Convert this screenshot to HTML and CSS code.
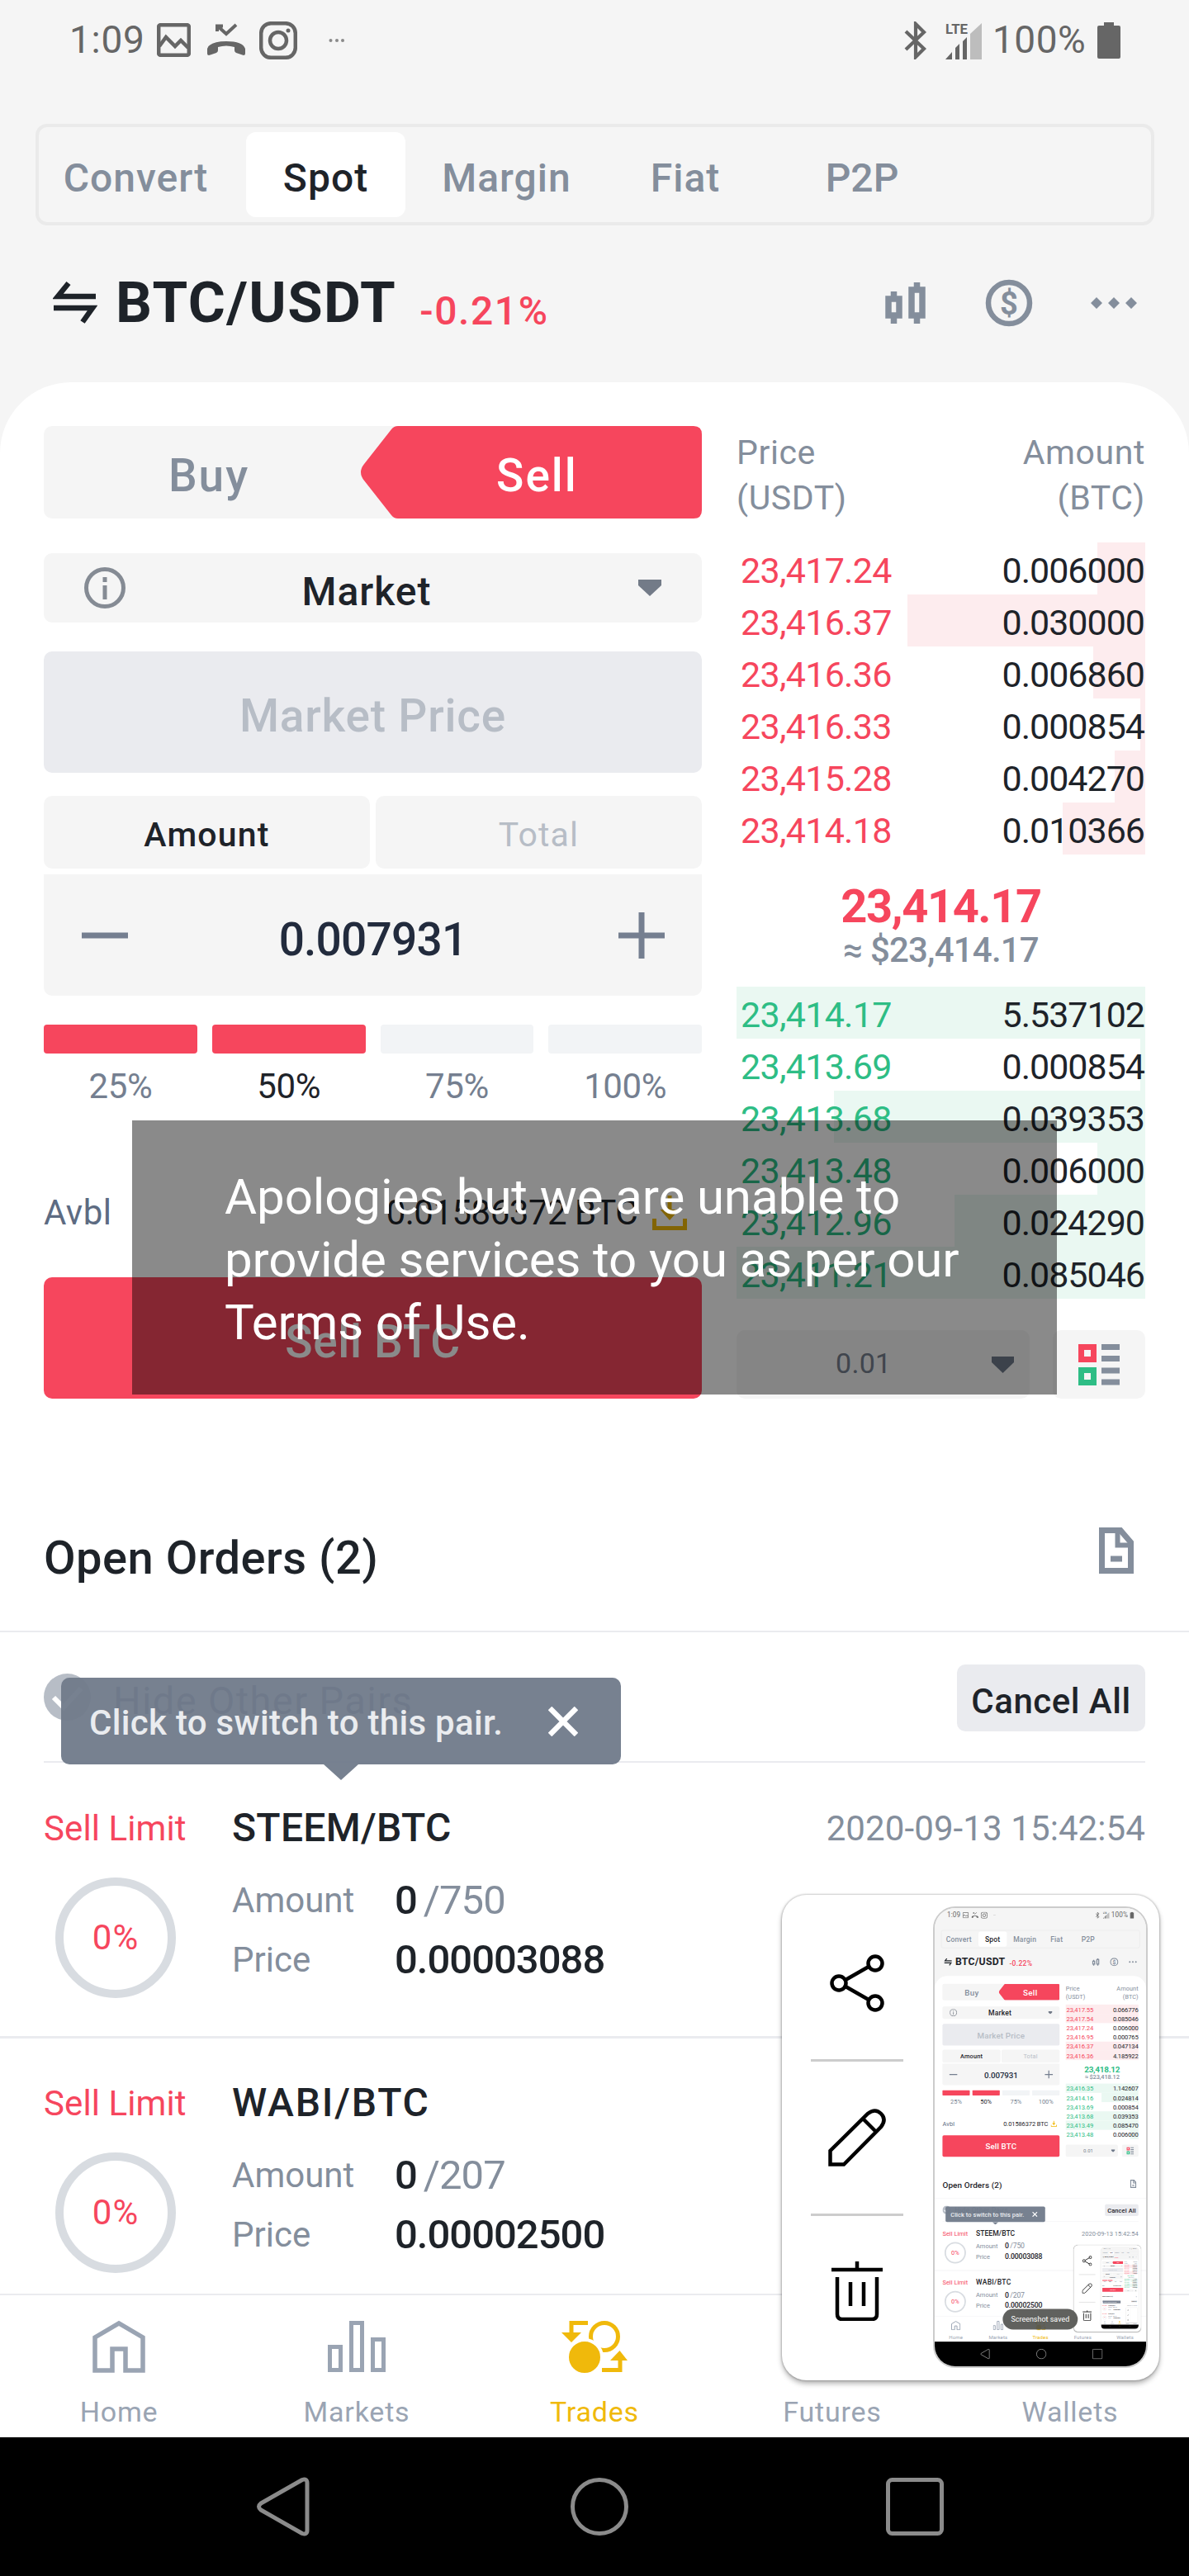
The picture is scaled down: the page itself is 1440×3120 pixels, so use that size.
FILE: index.html
```
<!DOCTYPE html>
<html lang="en">
<head>
    <meta charset="UTF-8">
    <meta name="viewport" content="width=device-width, initial-scale=1.0">

    <title>BTC/USDT</title>

    <link rel="stylesheet" href="styles.css">
</head>
<body>

<div class="screen">

    <div class="content">

        <div class="status-bar">
            <span class="clock">1:09</span>
            <svg class="st-image" width="41" height="41" viewBox="0 0 41 41" fill="none" stroke="#666" stroke-width="4.5"><rect x="2.2" y="2.2" width="36.6" height="36.6" rx="2"/><path d="M3 28l8-11 11 11 7-7 9 9"/></svg>
            <svg class="st-call" width="48" height="41" viewBox="0 0 48 41"><path d="M13 10V3.500h7M14 4l10 9L36 2" fill="none" stroke="#666" stroke-width="4"/><path d="M1 31Q4 22 24 22t23 9v6q0 2-2 2l-9-3q-2-1-2-3v-4q-10-3-20 0v4q0 2-2 3l-9 3q-2 0-2-2z" fill="#666"/></svg>
            <svg class="st-insta" width="46" height="46" viewBox="0 0 46 46" fill="none" stroke="#666" stroke-width="4.500"><rect x="2.200" y="2.200" width="41.600" height="41.600" rx="12"/><circle cx="23" cy="23" r="10"/><circle cx="35" cy="11" r="2.500" fill="#666" stroke="none"/></svg>
            <svg class="st-more" width="20" height="6" viewBox="0 0 20 6" fill="#8a8a8a"><circle cx="2.500" cy="3" r="2"/><circle cx="10" cy="3" r="2"/><circle cx="17" cy="3" r="2"/></svg>
            <svg class="st-bt" width="28" height="46" viewBox="0 0 28 46" fill="none" stroke="#666" stroke-width="4.200"><path d="M2 12l22 21-10 10V3l10 10L2 34"/></svg>
            <svg class="st-signal" width="46" height="46" viewBox="0 0 46 46"><path d="M30 46V15L44 2v44z" fill="#bdbdbd"/><path d="M0 46l8-9v9zM12 46V32l5-5v19zM21 46V24l5-5v27z" fill="#666"/><text x="0" y="15" font-size="17" font-weight="700" fill="#666" textLength="27" lengthAdjust="spacingAndGlyphs">LTE</text></svg>
            <span class="battery-level">100%</span>
            <svg class="st-battery" width="28" height="44" viewBox="0 0 28 44" fill="#666"><path d="M8 0h12v4h6q2 0 2 2v36q0 2-2 2H2q-2 0-2-2V6q0-2 2-2h6z"/></svg>
        </div>

        <div class="market-tabs">
            <div class="tab tab-convert">Convert</div>
            <div class="tab tab-spot active">Spot</div>
            <div class="tab tab-margin">Margin</div>
            <div class="tab tab-fiat">Fiat</div>
            <div class="tab tab-p2p">P2P</div>
        </div>

        <div class="pair-bar">
            <svg width="54" height="54" viewBox="0 0 54 54" fill="none" stroke="#1e2329" stroke-width="6.500"><path d="M52 19H6L19 3"/><path d="M1 33h47L36 50"/></svg>
            <span class="pair-name">BTC/USDT</span>
            <span class="pair-change">-0.21%</span>
            <svg class="ic-candle" width="52" height="52" viewBox="0 0 52 52" fill="none" stroke="#848e9c" stroke-width="7.500"><path d="M5 21h13v20H5zM11.500 12v8M11.500 42v9M33 10h13v31H33zM39.500 1v8M39.500 42v9"/></svg>
            <svg class="ic-dollar" width="58" height="58" viewBox="0 0 58 58"><circle cx="29" cy="29" r="25" fill="none" stroke="#848e9c" stroke-width="6.500"/><text x="29" y="42.500" text-anchor="middle" font-size="38" font-weight="700" fill="#848e9c">$</text></svg>
            <svg class="ic-dots" width="58" height="16" viewBox="0 0 58 16" fill="#848e9c"><path d="M8 1l7 7-7 7-7-7zM29 1l7 7-7 7-7-7zM50 1l7 7-7 7-7-7z"/></svg>
        </div>

        <div class="panel">

            <div class="trade">

                <div class="order-form">
                    <div class="side-toggle">
                        <div class="side-buy">Buy</div>
                        <div class="side-sell">Sell</div>
                    </div>

                    <div class="type-select">
                        <svg width="50" height="50" viewBox="0 0 50 50" fill="none" stroke="#858b94" stroke-width="5"><circle cx="25" cy="25" r="22.500"/><path d="M25 12v6M25 22v17"/></svg>
                        <span>Market</span>
                        <svg width="28" height="20" viewBox="0 0 28 20" fill="#737b88"><path d="M0 0h28v7L14 20 0 7z"/></svg>
                    </div>

                    <div class="price-field">Market Price</div>

                    <div class="unit-tabs">
                        <div class="unit active">Amount</div>
                        <div class="unit">Total</div>
                    </div>

                    <div class="stepper">
                        <svg width="56" height="56" viewBox="0 0 56 56" fill="#757f90"><path d="M0 24.500h56v7H0z"/></svg>
                        <span>0.007931</span>
                        <svg width="56" height="56" viewBox="0 0 56 56" fill="#757f90"><path d="M0 24.500h56v7H0zM24.500 0h7v56h-7z"/></svg>
                    </div>

                    <div class="percents">
                        <div class="percent filled">25%</div>
                        <div class="percent filled current">50%</div>
                        <div class="percent">75%</div>
                        <div class="percent">100%</div>
                    </div>

                    <div class="available">
                        <span class="avbl-label">Avbl</span>
                        <span class="avbl-value">0.01586372 BTC</span>
                        <svg width="42" height="42" viewBox="0 0 42 42"><path d="M2.500 28v11.500h37V28" fill="none" stroke="#f0b90b" stroke-width="5"/><path d="M18.500 0h5v17h9L21 30 9.500 17h9z" fill="#f0b90b"/></svg>
                    </div>

                    <div class="submit">Sell BTC</div>
                </div>

                <div class="order-book">
                    <div class="book-head">
                        <div>Price<br>(USDT)</div>
                        <div class="right">Amount<br>(BTC)</div>
                    </div>
                    <div class="asks"></div>
                    <div class="last-price"></div>
                    <div class="last-fiat"></div>
                    <div class="bids"></div>
                    <div class="book-foot">
                        <div class="depth-select">
                            <span>0.01</span>
                            <svg width="27" height="20" viewBox="0 0 27 20" fill="#6f7a8b"><path d="M0 0h27v7L13.500 20 0 7z"/></svg>
                        </div>
                        <div class="book-mode">
                            <svg width="50" height="50" viewBox="0 0 50 50"><path d="M3.500 3.500h15v15h-15z" fill="none" stroke="#f6465d" stroke-width="7"/><path d="M3.500 31.500h15v15h-15z" fill="none" stroke="#2ebd85" stroke-width="7"/><path d="M28 0h22v7H28zM28 14h22v7H28zM28 28.500h22v7H28zM28 42.500h22v7H28z" fill="#848e9c"/></svg>
                        </div>
                    </div>
                </div>

            </div>

            <div class="orders-head">
                <span>Open Orders (2)</span>
                <svg width="42" height="56" viewBox="0 0 42 56" fill="none" stroke="#848e9c" stroke-width="7"><path d="M3.500 3.500H26L38.500 18v34.500h-35z"/><path d="M22.500 3v18.500H39" stroke-width="6"/><path d="M14 38h14"/></svg>
            </div>

            <div class="orders-filter">
                <svg width="57" height="57" viewBox="0 0 57 57"><circle cx="28.500" cy="28.500" r="28.500" fill="#b7bdc6"/><path d="M12 29l12 12 21-23" fill="none" stroke="#fff" stroke-width="6"/></svg>
                <span class="hide-pairs">Hide Other Pairs</span>
                <span class="cancel-all">Cancel All</span>

                <div class="tip">
                    <span>Click to switch to this pair.</span>
                    <svg width="36" height="36" viewBox="0 0 36 36" stroke="#fff" stroke-width="6.500"><path d="M2 2l32 32M34 2L2 34"/></svg>
                </div>
            </div>

            <div class="order">
                <div class="order-type">Sell Limit</div>
                <div class="order-title">
                    <span class="order-pair">STEEM/BTC</span>
                    <span class="order-date">2020-09-13 15:42:54</span>
                </div>
                <div class="ring">0%</div>
                <div class="order-info">
                    <span class="info-label">Amount</span><span class="info-value">0<em>/750</em></span>
                    <span class="info-label">Price</span><span class="info-value">0.00003088</span>
                </div>
            </div>

            <div class="order">
                <div class="order-type">Sell Limit</div>
                <div class="order-title">
                    <span class="order-pair wide">WABI/BTC</span>
                </div>
                <div class="ring">0%</div>
                <div class="order-info">
                    <span class="info-label">Amount</span><span class="info-value">0<em>/207</em></span>
                    <span class="info-label">Price</span><span class="info-value">0.00002500</span>
                </div>
            </div>

        </div>
    </div>

    <div class="bottom-nav">
        <div class="nav-item">
            <svg width="64" height="64" viewBox="0 0 64 64" fill="none" stroke="#9aa4b3" stroke-width="5.500"><path d="M3 61V21L32 4l29 17v40H40V35H24v26z"/></svg>
            <span>Home</span>
        </div>
        <div class="nav-item">
            <svg width="70" height="64" viewBox="0 0 70 64" fill="none" stroke="#9aa4b3" stroke-width="5"><path d="M2.500 32.500h13v28h-13zM28.500 3.500h13v57h-13zM54.500 23.500h13v37h-13z"/></svg>
            <span>Markets</span>
        </div>
        <div class="nav-item current">
            <svg width="80" height="64" viewBox="0 0 80 64" fill="none" stroke="#f0b90b" stroke-width="5"><circle cx="52" cy="20" r="16.500"/><circle cx="28" cy="45" r="21" fill="#f0b90b" stroke="#fff" stroke-width="4"/><path d="M32 3.500H12V17M49 60.500h22V46"/><path d="M0 15h24L12 27zM59 49h21L70.500 37z" fill="#f0b90b" stroke="none"/></svg>
            <span>Trades</span>
        </div>
        <div class="nav-item">
            <svg width="64" height="64" viewBox="0 0 64 64" fill="none" stroke="#9aa4b3" stroke-width="5"><path d="M3 3h58v58H3z"/></svg>
            <span>Futures</span>
        </div>
        <div class="nav-item">
            <svg width="64" height="64" viewBox="0 0 64 64" fill="none" stroke="#9aa4b3" stroke-width="5"><path d="M3 10h58v44H3zM42 26h19v12H42z"/></svg>
            <span>Wallets</span>
        </div>
    </div>

    <div class="system-nav">
        <svg width="72" height="72" viewBox="0 0 72 72" fill="none" stroke="#8b8b8b" stroke-width="5" stroke-linejoin="round"><path d="M8 32L58 3.500q6-2 6 4v57q0 6-6 4L8 40q-5-4 0-8z"/></svg>
        <svg width="72" height="72" viewBox="0 0 72 72" fill="none" stroke="#8b8b8b" stroke-width="5"><circle cx="36" cy="36" r="32.500"/></svg>
        <svg width="72" height="72" viewBox="0 0 72 72" fill="none" stroke="#8b8b8b" stroke-width="5"><rect x="3.500" y="3.500" width="65" height="65" rx="5"/></svg>
    </div>

    <div class="toast">Apologies but we are unable to provide services to you as per our <span>Terms of Use.</span></div>

    <div class="capture">
        <div class="capture-actions">
            <div class="action">
                <svg width="66" height="70" viewBox="0 0 66 70" fill="none" stroke="#000" stroke-width="4.500"><circle cx="11" cy="35" r="8.500"/><circle cx="55" cy="11" r="8.500"/><circle cx="55" cy="59" r="8.500"/><path d="M19 31l28-16M19 39l28 16"/></svg>
            </div>
            <div class="action">
                <svg width="70" height="70" viewBox="0 0 70 70" fill="none" stroke="#000" stroke-width="4.500"><path d="M2.500 67.500V51L48 6q9-7 16 0t0 16L19 67.500zM42 12l16 16"/></svg>
            </div>
            <div class="action">
                <svg width="62" height="72" viewBox="0 0 62 72" fill="none" stroke="#000" stroke-width="4.500"><path d="M0 10h62M31 0v10M7 19v45q0 6 6 6h36q6 0 6-6V19M23 25v29M39 25v29"/></svg>
            </div>
        </div>
        <div class="thumb"></div>
    </div>

</div>

<script>

    var live = {
        change: '-0.21%',
        last: '23,414.17',
        trend: 'down',
        // price, amount, depth bar width
        asks: [
            ['23,417.24', '0.006000', 58],
            ['23,416.37', '0.030000', 288],
            ['23,416.36', '0.006860', 63],
            ['23,416.33', '0.000854', 6],
            ['23,415.28', '0.004270', 37],
            ['23,414.18', '0.010366', 100]
        ],
        bids: [
            ['23,414.17', '5.537102', 495],
            ['23,413.69', '0.000854', 6],
            ['23,413.68', '0.039353', 377],
            ['23,413.48', '0.006000', 58],
            ['23,412.96', '0.024290', 231],
            ['23,411.21', '0.085046', 495]
        ]
    };

    var captured = {
        change: '-0.22%',
        last: '23,418.12',
        trend: 'up',
        asks: [
            ['23,417.55', '0.066776', 495],
            ['23,417.54', '0.085046', 495],
            ['23,417.24', '0.006000', 58],
            ['23,416.95', '0.000765', 6],
            ['23,416.37', '0.047134', 495],
            ['23,416.36', '4.185922', 495]
        ],
        bids: [
            ['23,416.35', '1.142607', 495],
            ['23,414.16', '0.024814', 251],
            ['23,413.69', '0.000854', 6],
            ['23,413.68', '0.039353', 400],
            ['23,413.49', '0.085470', 495],
            ['23,413.48', '0.006000', 58]
        ]
    };

    function rows(list) {
        return list.map(function (r) {
            return '<div class="book-row"><i class="depth" style="width:' + r[2] + 'px"></i>' +
                '<span class="book-price">' + r[0] + '</span><span class="book-amount">' + r[1] + '</span></div>';
        }).join('');
    }

    function fill(screen, data) {
        screen.querySelector('.pair-change').textContent = data.change;
        screen.querySelector('.asks').innerHTML = rows(data.asks);
        screen.querySelector('.bids').innerHTML = rows(data.bids);
        screen.querySelector('.last-price').textContent = data.last;
        screen.querySelector('.last-price').className = 'last-price ' + data.trend;
        screen.querySelector('.last-fiat').textContent = '≈ $' + data.last;
    }

    // smaller copy of the screen, shown in the capture card
    function makeCapture(screen) {
        var copy = screen.cloneNode(true);
        copy.removeChild(copy.querySelector('.toast'));
        copy.classList.add('mini');
        fill(copy, captured);
        return copy;
    }

    var main = document.querySelector('.screen');
    var shot = makeCapture(main);
    var inner = makeCapture(main);

    var saved = document.createElement('div');
    saved.className = 'saved';
    saved.textContent = 'Screenshot saved';
    shot.appendChild(saved);

    shot.querySelector('.thumb').appendChild(inner);
    fill(main, live);
    main.querySelector('.thumb').appendChild(shot);

</script>

</body>
</html>
```
FILE: styles.css
```
* {
    box-sizing: border-box;
}
body {
    margin: 0;
    font-family: Roboto, "Liberation Sans", sans-serif;
    color: #1e2329;
}
svg {
    display: block;
    flex: none;
}
.screen {
    position: relative;
    width: 1440px;
    height: 3120px;
    background: #f5f5f5;
    overflow: hidden;
}
.content {
    display: flex;
    flex-direction: column;
    height: 2778px;
    overflow: hidden;
}

/* status bar */
.status-bar {
    display: flex;
    align-items: center;
    height: 97px;
    padding: 0 83px 0 84px;
    font-size: 46px;
    line-height: 97px;
    color: #666;
    flex: none;
}
.clock {
    width: 106px;
    letter-spacing: 0.7px;
}
.st-image {
    margin-right: 19px;
}
.st-call {
    margin-right: 16px;
}
.st-insta {
    margin-right: 38px;
}
.st-bt {
    margin-left: auto;
    margin-right: 22px;
}
.battery-level {
    width: 123px;
    margin-left: 11px;
    letter-spacing: 0.5px;
}
.st-battery {
    margin-left: 4px;
}

/* market tabs */
.market-tabs {
    display: flex;
    height: 123px;
    margin: 53px 42px 0 43px;
    padding-top: 6px;
    border: 4px solid #eaeaea;
    border-radius: 14px;
    font-size: 48px;
    font-weight: 500;
    line-height: 111px;
    letter-spacing: 1px;
    text-align: center;
    color: #848e9c;
    flex: none;
}
.tab {
    height: 103px;
}
.tab-convert {
    width: 235px;
    margin-right: 16px;
}
.tab-spot {
    width: 193px;
    margin-right: 14px;
}
.tab-margin {
    width: 217px;
}
.tab-fiat {
    width: 216px;
}
.tab-p2p {
    width: 212px;
    letter-spacing: 0;
}
.tab.active {
    background: #fff;
    border-radius: 12px;
    color: #1e2329;
}

/* pair bar */
.pair-bar {
    display: flex;
    align-items: center;
    height: 187px;
    padding: 0 62px 0 64px;
    flex: none;
}
.pair-name {
    margin-left: 22px;
    font-size: 69px;
    font-weight: 700;
    letter-spacing: 1.4px;
}
.pair-change {
    margin-left: 28px;
    padding-top: 20px;
    font-size: 48px;
    font-weight: 500;
    letter-spacing: 1.6px;
    color: #f6465d;
}
.ic-candle {
    margin-left: auto;
    margin-right: 70px;
}
.ic-dollar {
    margin-right: 69px;
}

.panel {
    flex: none;
    margin-top: 3px;
    padding-top: 53px;
    background: #fff;
    border-radius: 86px 86px 0 0;
}
.trade {
    display: grid;
    grid-template-columns: 797px 495px;
    column-gap: 42px;
    padding-left: 53px;
}

/* order form */
.side-toggle {
    display: flex;
    height: 112px;
    background: #f5f5f5;
    border-radius: 10px;
    font-size: 55px;
    font-weight: 500;
    line-height: 121px;
    letter-spacing: 2px;
    text-align: center;
}
.side-buy {
    width: 400px;
    margin-right: -16px;
    color: #848e9c;
}
.side-sell {
    width: 413px;
    padding-left: 14px;
    background: #f6465d;
    color: #fff;
    clip-path: path("M45 0H403Q413 0 413 10V102Q413 112 403 112H45Q40 112 37 108L4 66Q-4 56 4 46L37 4Q40 0 45 0Z");
}
.type-select {
    display: flex;
    align-items: center;
    justify-content: space-between;
    height: 84px;
    margin-top: 42px;
    padding: 0 49px;
    background: #f5f5f5;
    border-radius: 10px;
    font-size: 48px;
    font-weight: 500;
    letter-spacing: 1px;
}
.type-select span {
    padding: 8px 37px 0 0;
}
.price-field {
    height: 147px;
    margin-top: 35px;
    background: #eaebef;
    border-radius: 10px;
    font-size: 55px;
    font-weight: 500;
    line-height: 157px;
    letter-spacing: 0.8px;
    text-align: center;
    color: #b7bdc6;
}
.unit-tabs {
    display: flex;
    gap: 7px;
    margin-top: 28px;
}
.unit {
    flex: 1;
    height: 88px;
    background: #f5f5f5;
    border-radius: 10px;
    font-size: 41px;
    line-height: 95px;
    letter-spacing: 1.2px;
    text-align: center;
    color: #b7bdc6;
}
.unit.active {
    font-weight: 500;
    color: #1e2329;
}
.stepper {
    display: flex;
    align-items: center;
    justify-content: space-between;
    height: 147px;
    margin-top: 7px;
    padding: 0 45px 0 46px;
    background: #f5f5f5;
    border-radius: 0 0 10px 10px;
    font-size: 55px;
    font-weight: 500;
    letter-spacing: -0.8px;
    color: #222b3d;
}
.stepper span {
    padding: 10px 1px 0 0;
}
.percents {
    display: grid;
    grid-template-columns: repeat(4, 1fr);
    column-gap: 18px;
    margin-top: 35px;
}
.percent {
    font-size: 42px;
    line-height: 79px;
    letter-spacing: -0.4px;
    text-align: center;
    color: #757f90;
}
.percent::before {
    content: "";
    display: block;
    height: 35px;
    background: #f2f4f6;
    border-radius: 4px;
}
.percent.filled::before {
    background: #f6465d;
}
.percent.current {
    color: #1e2329;
}
.available {
    display: flex;
    align-items: center;
    height: 81px;
    margin-top: 73px;
    font-size: 42px;
    letter-spacing: 0.5px;
}
.avbl-label {
    color: #5d6b82;
}
.avbl-value {
    margin-left: auto;
    margin-right: 18px;
    letter-spacing: -0.5px;
}
.available svg {
    margin-right: 18px;
}
.submit {
    height: 147px;
    margin-top: 38px;
    background: #f6465d;
    border-radius: 10px;
    font-size: 55px;
    font-weight: 500;
    line-height: 156px;
    letter-spacing: 0.7px;
    text-align: center;
    color: #fff;
}

/* order book */
.book-head {
    display: flex;
    justify-content: space-between;
    padding-top: 5px;
    margin-bottom: 26px;
    font-size: 41px;
    line-height: 55px;
    letter-spacing: 0.6px;
    color: #848e9c;
}
.book-head .right {
    text-align: right;
}
.book-row {
    display: flex;
    justify-content: space-between;
    position: relative;
    height: 63px;
    padding: 6px 1px 0 5px;
    font-size: 43px;
    line-height: 57px;
}
.depth {
    position: absolute;
    top: 0;
    right: 0;
    height: 63px;
}
.asks .depth {
    background: #fdecee;
}
.bids .depth {
    background: #eaf8f2;
}
.book-price {
    position: relative;
    letter-spacing: -0.7px;
}
.book-amount {
    position: relative;
    letter-spacing: -1px;
}
.asks .book-price {
    color: #f6465d;
}
.bids .book-price {
    color: #2ebd85;
}
.last-price {
    margin-top: 35px;
    font-size: 56px;
    font-weight: 700;
    line-height: 56px;
    letter-spacing: -1.4px;
    text-align: center;
}
.last-price.down {
    color: #f6465d;
}
.last-price.up {
    color: #2ebd85;
}
.last-fiat {
    margin-bottom: 19px;
    font-size: 42px;
    font-weight: 500;
    line-height: 50px;
    letter-spacing: -0.8px;
    text-align: center;
    color: #848e9c;
}
.book-foot {
    display: flex;
    justify-content: space-between;
    height: 83px;
    margin-top: 38px;
}
.depth-select {
    display: flex;
    align-items: center;
    width: 355px;
    padding-left: 120px;
    background: #f5f5f5;
    border-radius: 10px;
    font-size: 34px;
    letter-spacing: 0.3px;
    color: #76808f;
}
.depth-select span {
    margin-right: 121px;
    padding-bottom: 4px;
}
.book-mode {
    display: flex;
    align-items: center;
    justify-content: center;
    width: 112px;
    background: #f5f5f5;
    border-radius: 10px;
}

/* open orders */
.orders-head {
    display: flex;
    align-items: center;
    justify-content: space-between;
    height: 178px;
    margin-top: 105px;
    padding: 0 67px 0 53px;
    border-bottom: 2px solid #eaebef;
    font-size: 56px;
    font-weight: 500;
    letter-spacing: 0.5px;
}
.orders-head svg {
    margin-bottom: 18px;
}
.orders-filter {
    display: flex;
    align-items: center;
    position: relative;
    height: 158px;
    margin: 0 53px;
    border-bottom: 2px solid #eaebef;
}
.hide-pairs {
    margin-left: 27px;
    padding-top: 8px;
    font-size: 47px;
    letter-spacing: 1.4px;
    color: #5d6b82;
}
.cancel-all {
    width: 228px;
    height: 81px;
    margin-left: auto;
    margin-top: 3px;
    background: #eaebef;
    border-radius: 10px;
    font-size: 42px;
    font-weight: 500;
    line-height: 90px;
    letter-spacing: 0.5px;
    text-align: center;
}
.tip {
    display: flex;
    align-items: center;
    position: absolute;
    left: 21px;
    top: 55px;
    width: 678px;
    height: 105px;
    padding-left: 34px;
    background: rgba(112, 122, 138, 0.95);
    border-radius: 10px;
    font-size: 42px;
    font-weight: 500;
    letter-spacing: 0.3px;
    color: #eaecef;
    z-index: 1;
}
.tip span {
    width: 502px;
    padding-top: 3px;
    white-space: nowrap;
}
.tip svg {
    margin-left: 54px;
}
.tip::after {
    content: "";
    position: absolute;
    left: 318px;
    top: 105px;
    width: 42px;
    height: 19px;
    background: rgba(112, 122, 138, 0.95);
    clip-path: polygon(0 0, 100% 0, 50% 100%);
}
.order {
    display: grid;
    grid-template-columns: 228px 1fr;
    grid-template-rows: 60px 1fr;
    height: 334px;
    padding: 48px 53px 0;
    border-bottom: 3px solid #eaebef;
    margin-bottom: -1px;
}
.order-type {
    font-size: 42px;
    line-height: 63px;
    letter-spacing: 0.1px;
    color: #f6465d;
}
.order-title {
    display: flex;
    justify-content: space-between;
    line-height: 61px;
}
.order-pair {
    font-size: 48px;
    font-weight: 500;
    letter-spacing: 0.3px;
}
.order-pair.wide {
    letter-spacing: 1.8px;
}
.order-date {
    font-size: 42px;
    line-height: 63px;
    letter-spacing: 0.1px;
    color: #848e9c;
}
.ring {
    width: 146px;
    height: 146px;
    margin: 31px 0 0 14px;
    border: 10px solid #d8dce1;
    border-radius: 50%;
    font-size: 42px;
    line-height: 126px;
    letter-spacing: 1px;
    text-align: center;
    color: #f6465d;
}
.order-info {
    display: grid;
    grid-template-columns: 197px 1fr;
    grid-auto-rows: 72px;
    align-content: start;
    margin-top: 22px;
    line-height: 73px;
}
.info-label {
    font-size: 42px;
    color: #848e9c;
}
.info-value {
    font-size: 49px;
    font-weight: 500;
    letter-spacing: -1px;
}
.info-value em {
    margin-left: 8px;
    font-style: normal;
    font-weight: 400;
    color: #848e9c;
}

/* bottom navigation */
.bottom-nav {
    display: grid;
    grid-template-columns: repeat(5, 1fr);
    height: 174px;
    background: #fff;
    border-top: 2px solid #eaebef;
}
.nav-item {
    display: flex;
    flex-direction: column;
    align-items: center;
    gap: 27px;
    padding-top: 30px;
    font-size: 34px;
    line-height: 40px;
    letter-spacing: 0.8px;
    color: #9aa4b3;
}
.nav-item.current {
    color: #f0b90b;
}
.system-nav {
    display: flex;
    align-items: center;
    gap: 310px;
    height: 168px;
    padding-left: 308px;
    background: #000;
}

/* message over the page */
.toast {
    position: absolute;
    left: 160px;
    top: 1357px;
    width: 1120px;
    height: 332px;
    padding: 55px 100px 0 112px;
    background: rgba(0, 0, 0, 0.46);
    font-size: 60px;
    line-height: 76px;
    letter-spacing: -0.1px;
    color: #fff;
}
.toast span {
    display: block;
}

/* screen capture card */
.capture {
    display: flex;
    position: absolute;
    left: 947px;
    top: 2295px;
    width: 457px;
    height: 588px;
    background: #fff;
    border-radius: 30px;
    box-shadow: 0 0 2px 1px rgba(0, 0, 0, 0.18), 0 4px 6px rgba(0, 0, 0, 0.3);
}
.capture-actions {
    width: 183px;
    padding: 15px 36px 0 35px;
}
.action {
    display: flex;
    align-items: center;
    justify-content: center;
    height: 187px;
    border-bottom: 3px solid #ccc;
}
.action:last-child {
    border: none;
    height: 182px;
}
.thumb {
    width: 260px;
    height: 559px;
    margin-top: 14px;
    border: 2px solid #ccc;
    border-radius: 27px;
    overflow: hidden;
}
.screen.mini {
    transform: scale(0.1779);
    transform-origin: 0 0;
}
.saved {
    position: absolute;
    left: 463px;
    top: 2729px;
    width: 511px;
    height: 140px;
    background: rgba(82, 84, 80, 0.92);
    border-radius: 70px;
    font-size: 50px;
    line-height: 142px;
    letter-spacing: 0.2px;
    text-align: center;
    color: #fff;
}
```
